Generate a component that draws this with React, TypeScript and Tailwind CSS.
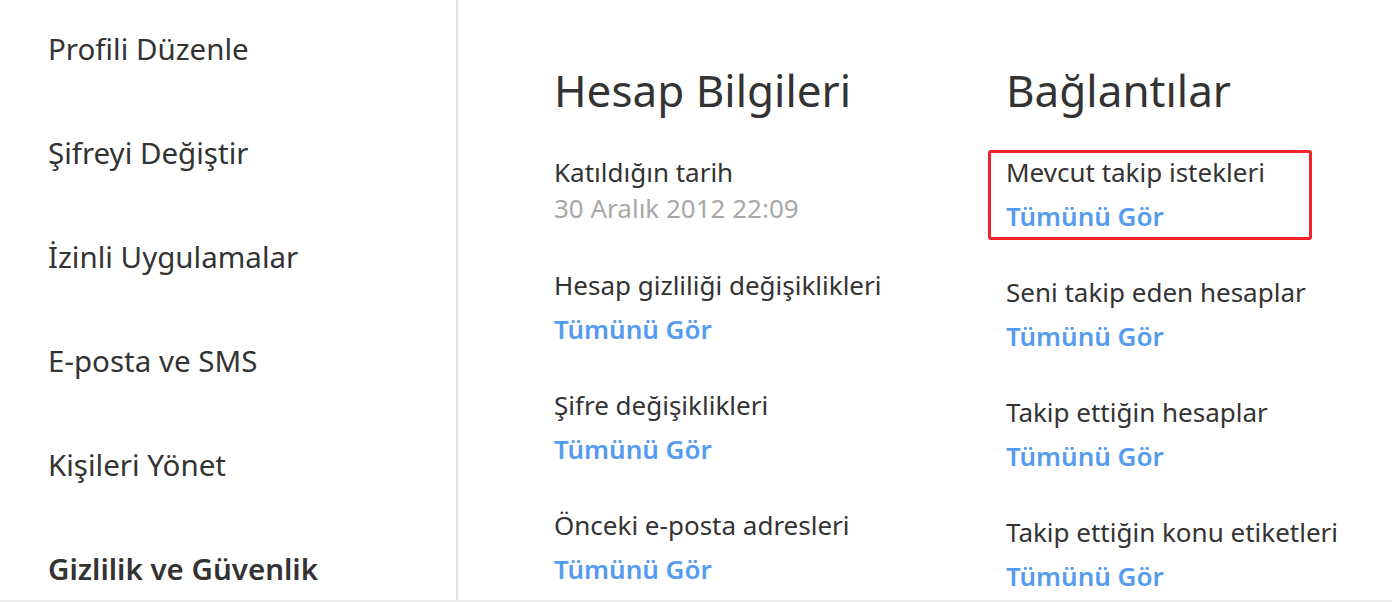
import React from "react";

const navItems = [
  { label: "Profili Düzenle", active: false },
  { label: "Şifreyi Değiştir", active: false },
  { label: "İzinli Uygulamalar", active: false },
  { label: "E-posta ve SMS", active: false },
  { label: "Kişileri Yönet", active: false },
  { label: "Gizlilik ve Güvenlik", active: true },
];

function LinkGroup({ label, boxed }: { label: string; boxed?: boolean }) {
  return (
    <div className="relative flex flex-col">
      {boxed && (
        <div className="pointer-events-none absolute -left-[18px] -top-[2px] h-[90px] w-[324px] rounded-[3px] border-[3px] border-[#f5222d]" />
      )}
      <div className="h-[40px] leading-[40px] text-[26px] text-[#333333] whitespace-nowrap">{label}</div>
      <a className="h-[48px] leading-[48px] text-[26px] font-semibold text-[#559cef] whitespace-nowrap">Tümünü Gör</a>
    </div>
  );
}

export default function App() {
  return (
    <div className="flex h-[602px] w-[1392px] overflow-hidden border-b-2 border-[#ececec] bg-white font-['Noto_Sans',sans-serif]">
      <nav className="flex w-[458px] shrink-0 flex-col gap-[64px] border-r-2 border-[#e2e2e2] pl-[48px] pt-[29px]">
        {navItems.map((item) => (
          <div
            key={item.label}
            className={`h-[40px] leading-[40px] text-[29.5px] whitespace-nowrap text-[#333333] ${item.active ? "font-semibold" : "font-normal"}`}
          >
            {item.label}
          </div>
        ))}
      </nav>
      <main className="flex gap-0 pl-[96px] pt-[62px]">
        <section className="flex w-[452px] flex-col">
          <h1 className="h-[56px] leading-[56px] text-[44px] font-normal text-[#333333] whitespace-nowrap">Hesap Bilgileri</h1>
          <div className="mt-[34px] flex flex-col gap-[32px]">
            <div className="flex flex-col pb-[9px]">
              <div className="h-[40px] leading-[40px] text-[26px] text-[#333333] whitespace-nowrap">Katıldığın tarih</div>
              <div className="h-[32px] leading-[32px] text-[26px] text-[#a8a8a8] whitespace-nowrap">30 Aralık 2012 22:09</div>
            </div>
            <LinkGroup label="Hesap gizliliği değişiklikleri" />
            <LinkGroup label="Şifre değişiklikleri" />
            <LinkGroup label="Önceki e-posta adresleri" />
          </div>
        </section>
        <section className="flex flex-col">
          <h1 className="h-[56px] leading-[56px] text-[44px] font-normal text-[#333333] whitespace-nowrap">Bağlantılar</h1>
          <div className="mt-[34px] flex flex-col gap-[32px]">
            <LinkGroup label="Mevcut takip istekleri" boxed />
            <LinkGroup label="Seni takip eden hesaplar" />
            <LinkGroup label="Takip ettiğin hesaplar" />
            <LinkGroup label="Takip ettiğin konu etiketleri" />
          </div>
        </section>
      </main>
    </div>
  );
}
